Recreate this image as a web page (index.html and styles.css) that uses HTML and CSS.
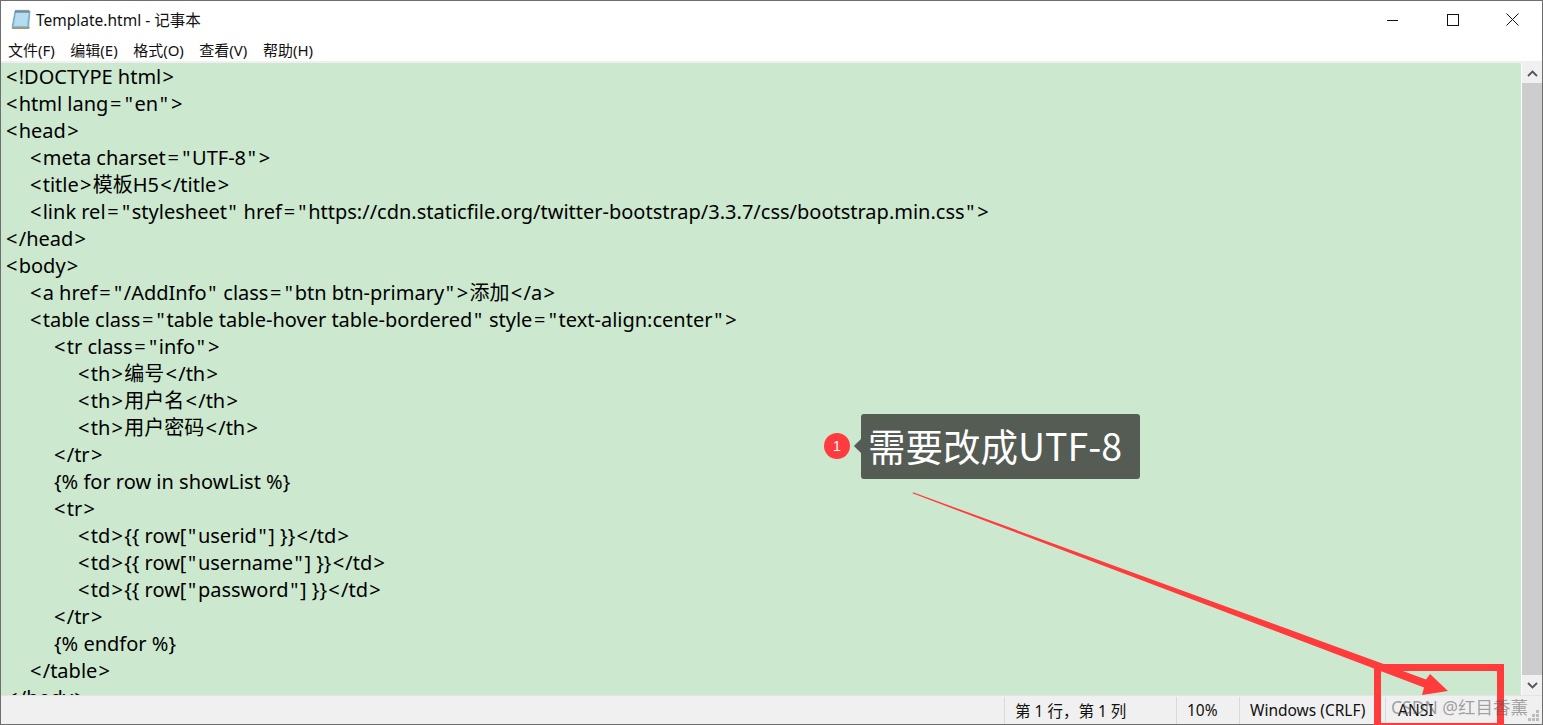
FILE: index.html
```html
<!DOCTYPE html>
<html lang="zh">
<head>
<meta charset="utf-8">
<title>Template.html - 记事本</title>
<link rel="stylesheet" href="styles.css">
</head>
<body>
<div class="window">
  <header class="titlebar">
    <svg class="app-icon" width="20" height="21" viewBox="0 0 20 21">
      <path d="M4 2h15l-1.500 16.500H1z" fill="#7fbcdc" stroke="#6f9fb8" stroke-width=".8"/>
      <path d="M5 3.500h12.500L16 17H3z" fill="#b5dcef"/>
      <path d="M1 19.300h16.500l1-1.500" fill="none" stroke="#a8946a" stroke-width="1.500"/>
      <path d="M5 .8v3M7 .8v3M9 .8v3M11 .8v3M13 .8v3M15 .8v3M17 .8v3" stroke="#5e6468" stroke-width="1"/>
    </svg>
    <span class="title">Template.html - 记事本</span>
    <div class="controls">
      <span class="ctl"><svg width="12" height="12" viewBox="0 0 12 12"><path d="M0 6.500h11" stroke="#111" stroke-width="1"/></svg></span>
      <span class="ctl"><svg width="12" height="12" viewBox="0 0 12 12"><rect x=".5" y=".5" width="11" height="11" fill="none" stroke="#111"/></svg></span>
      <span class="ctl"><svg width="13" height="13" viewBox="0 0 13 13"><path d="M.5.5l12 12M12.500.5l-12 12" stroke="#111" stroke-width="1"/></svg></span>
    </div>
  </header>
  <nav class="menubar">
    <span>文件(F)</span><span>编辑(E)</span><span>格式(O)</span><span>查看(V)</span><span>帮助(H)</span>
  </nav>
  <main class="editor">
    <div class="code">
      <div><i>&lt;</i>!DOCTYPE html<i>&gt;</i></div>
      <div><i>&lt;</i>html lang<i class="q">=</i><i class="q">"</i>en<i class="q">"</i><i>&gt;</i></div>
      <div><i>&lt;</i>head<i>&gt;</i></div>
      <div class="l1"><i>&lt;</i>meta charset<i class="q">=</i><i class="q">"</i>UTF-8<i class="q">"</i><i>&gt;</i></div>
      <div class="l1"><i>&lt;</i>title<i>&gt;</i>模板H5<i>&lt;</i>/title<i>&gt;</i></div>
      <div class="l1"><i>&lt;</i>link rel<i class="q">=</i><i class="q">"</i>stylesheet<i class="q">"</i> href<i class="q">=</i><i class="q">"</i>https://cdn.staticfile.org/twitter-bootstrap/3.3.7/css/bootstrap.min.css<i class="q">"</i><i>&gt;</i></div>
      <div><i>&lt;</i>/head<i>&gt;</i></div>
      <div><i>&lt;</i>body<i>&gt;</i></div>
      <div class="l1"><i>&lt;</i>a href<i class="q">=</i><i class="q">"</i>/AddInfo<i class="q">"</i> class<i class="q">=</i><i class="q">"</i>btn btn-primary<i class="q">"</i><i>&gt;</i>添加<i>&lt;</i>/a<i>&gt;</i></div>
      <div class="l1"><i>&lt;</i>table class<i class="q">=</i><i class="q">"</i>table table-hover table-bordered<i class="q">"</i> style<i class="q">=</i><i class="q">"</i>text-align:center<i class="q">"</i><i>&gt;</i></div>
      <div class="l2"><i>&lt;</i>tr class<i class="q">=</i><i class="q">"</i>info<i class="q">"</i><i>&gt;</i></div>
      <div class="l3"><i>&lt;</i>th<i>&gt;</i>编号<i>&lt;</i>/th<i>&gt;</i></div>
      <div class="l3"><i>&lt;</i>th<i>&gt;</i>用户名<i>&lt;</i>/th<i>&gt;</i></div>
      <div class="l3"><i>&lt;</i>th<i>&gt;</i>用户密码<i>&lt;</i>/th<i>&gt;</i></div>
      <div class="l2"><i>&lt;</i>/tr<i>&gt;</i></div>
      <div class="l2">{% for row in showList %}</div>
      <div class="l2"><i>&lt;</i>tr<i>&gt;</i></div>
      <div class="l3"><i>&lt;</i>td<i>&gt;</i>{{ row[<i class="q">"</i>userid<i class="q">"</i>] }}<i>&lt;</i>/td<i>&gt;</i></div>
      <div class="l3"><i>&lt;</i>td<i>&gt;</i>{{ row[<i class="q">"</i>username<i class="q">"</i>] }}<i>&lt;</i>/td<i>&gt;</i></div>
      <div class="l3"><i>&lt;</i>td<i>&gt;</i>{{ row[<i class="q">"</i>password<i class="q">"</i>] }}<i>&lt;</i>/td<i>&gt;</i></div>
      <div class="l2"><i>&lt;</i>/tr<i>&gt;</i></div>
      <div class="l2">{% endfor %}</div>
      <div class="l1"><i>&lt;</i>/table<i>&gt;</i></div>
      <div><i>&lt;</i>/body<i>&gt;</i></div>
    </div>
    <div class="scrollbar">
      <span class="sb-btn"><svg width="11" height="7" viewBox="0 0 11 7"><path d="M1 6l4.500-4.500L10 6" fill="none" stroke="#555" stroke-width="1.800"/></svg></span>
      <span class="sb-thumb"></span>
      <span class="sb-btn"><svg width="11" height="7" viewBox="0 0 11 7"><path d="M1 1l4.500 4.500L10 1" fill="none" stroke="#555" stroke-width="1.800"/></svg></span>
    </div>
  </main>
  <footer class="statusbar">
    <span class="cell pos">第 1 行，第 1 列</span>
    <span class="cell zoom">10%</span>
    <span class="cell eol">Windows (CRLF)</span>
    <span class="cell enc">ANSI</span>
    <svg class="grip" width="12" height="12" viewBox="0 0 12 12"><path d="M8 0h3v3H8zM4 4h3v3H4zM8 4h3v3H8zM0 8h3v3H0zM4 8h3v3H4zM8 8h3v3H8z" fill="#bbb"/></svg>
  </footer>
</div>

<div class="note">
  <span class="badge">1</span>
  <div class="bubble">需要改成UTF-8</div>
</div>
<svg class="markup" width="1543" height="725" viewBox="0 0 1543 725">
  <path d="M913 492.300L1426 679.500 1430 674 1448 691 1422 695 1424 687.500 912.500 493.300z" fill="#ff3b3b"/>
  <rect x="1377.500" y="667.500" width="123" height="59" fill="none" stroke="#ff3b3b" stroke-width="7"/>
</svg>
<div class="watermark">CSDN @红目香薰</div>
</body>
</html>
```
FILE: styles.css
```css
* { box-sizing: border-box; }
html, body { margin: 0; height: 100%; overflow: hidden; }
body { font-family: "Noto Sans", "Noto Sans CJK SC", sans-serif; background: #fff; color: #000; }
.window {
  width: 1543px; height: 725px; display: flex; flex-direction: column;
  border: 1px solid #6e6e6e; background: #fff;
}
.titlebar { height: 37px; flex: none; display: flex; align-items: center; padding-left: 10px; }
.app-icon { flex: none; }
.title { margin-left: 5px; font-size: 15.500px; color: #111; }
.controls { margin-left: auto; display: flex; }
.ctl { width: 59.500px; display: flex; justify-content: center; align-items: center; }
.menubar {
  height: 23px; flex: none; display: flex; gap: 15.500px; padding-left: 7px; align-items: center;
  font-size: 15px; color: #111;
}
.editor { flex: 1; min-height: 0; display: flex; border-top: 2px solid #f0f0f0; background: #cce8cf; }
.code {
  flex: 1; min-width: 0; overflow: hidden; padding: 0 5px; font-size: 20px; line-height: 27px;
}
.code div { white-space: pre; }
.code .l1 { padding-left: 24px; }
.code .l2 { padding-left: 48px; }
.code .l3 { padding-left: 72px; }
.code i { font-style: normal; padding: 0 1.250px; }
.code i:first-child { padding-left: 0; }
.code i.q { padding: 0 1.650px; }
.scrollbar { width: 21px; flex: none; display: flex; flex-direction: column; background: #f0f0f0; border-left: 1px solid #fff; }
.sb-btn { height: 20px; flex: none; display: flex; align-items: center; justify-content: center; }
.sb-thumb { flex: 1; background: #cdcdcd; }
.statusbar {
  height: 29px; flex: none; display: flex; align-items: center; background: #f0f0f0; border-top: 1px solid #e4e4e4;
  font-size: 15.500px; color: #111; position: relative;
}
.cell { height: 27px; display: flex; align-items: center; border-left: 1px solid #d9d9d9; padding-left: 10px; white-space: pre; }
.pos { margin-left: 1003px; width: 172px; }
.zoom { width: 63px; }
.eol { width: 146px; }
.enc { flex: 1; padding-left: 12px; }
.grip { position: absolute; right: 2px; bottom: 2px; }
.note { position: absolute; left: 824px; top: 414px; display: flex; align-items: center; }
.badge {
  width: 26px; height: 26px; border-radius: 50%; background: #ff3b3f; color: #fff; font-size: 14px;
  display: flex; align-items: center; justify-content: center; font-family: "Liberation Sans", sans-serif; margin-top: -1px;
}
.bubble {
  position: relative; margin-left: 11px; width: 279px; height: 65px; background: #545c54; border-radius: 3px;
  color: #fff; font-size: 37.500px; line-height: 61px; padding-left: 7px; white-space: nowrap;
  font-family: "Noto Sans CJK SC", "Noto Sans", sans-serif;
}
.bubble::before {
  content: ""; position: absolute; left: -5px; top: 27px; width: 10px; height: 10px; background: #545c54; transform: rotate(45deg);
}
.markup { position: absolute; left: 0; top: 0; pointer-events: none; }
.watermark {
  position: absolute; left: 1391px; top: 694px; font-size: 17.500px; color: rgba(90,90,90,.55); white-space: nowrap;
}
```
